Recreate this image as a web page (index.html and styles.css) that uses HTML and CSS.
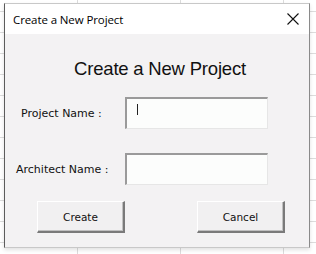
FILE: index.html
```html
<!DOCTYPE html>
<html lang="en">
<head>
    <meta charset="UTF-8">
    <title>Create a New Project</title>
    <link rel="stylesheet" href="styles.css">
</head>
<body>
    <div class="dialog">
        <div class="titlebar">
            <span class="title">Create a New Project</span>
            <svg class="close" width="12" height="12" viewBox="0 0 12 12">
                <path d="M0.5 0.5 L11.5 11.5 M11.5 0.5 L0.5 11.5" stroke="#111" stroke-width="1.1" fill="none"/>
            </svg>
        </div>
        <div class="content">
            <h1>Create a New Project</h1>

            <div class="row row-first">
                <label class="label label-project" for="projectName">Project Name :</label>
                <div class="field"><span class="caret"></span></div>
            </div>

            <div class="row">
                <label class="label label-architect" for="architectName">Architect Name :</label>
                <div class="field"></div>
            </div>

            <div class="buttons">
                <button class="btn">Create</button>
                <button class="btn">Cancel</button>
            </div>
        </div>
    </div>
</body>
</html>
```

FILE: styles.css
```css
html, body {
    margin: 0;
    padding: 0;
}
body {
    width: 316px;
    height: 254px;
    overflow: hidden;
    background-color: #fff;
    background-image:
        linear-gradient(to right, #dcdcdc 1px, transparent 1px),
        linear-gradient(to bottom, #dcdcdc 1px, transparent 1px);
    background-size: 103px 100%, 100% 21px;
    background-position: 77px 0, 0 11px;
    font-family: 'DejaVu Sans', sans-serif;
    padding-top: 3px;
    box-sizing: border-box;
}
.dialog {
    margin-left: 4px;
    width: 306px;
    height: 245px;
    background: #f3f2f3;
    border-left: 1px solid #5c5c5c;
    border-right: 1px solid #8a8a8a;
    border-top: 1px solid #c8c8c8;
    border-bottom: 1px solid #c8c8c8;
    box-sizing: border-box;
    box-shadow: 0 2px 4px rgba(0, 0, 0, 0.12);
}
.titlebar {
    height: 30px;
    background: #fff;
    display: flex;
    align-items: center;
    justify-content: space-between;
    padding: 0 10px 0 8px;
}
.title {
    font-family: 'Open Sans', 'Noto Sans', sans-serif;
    font-size: 11.5px;
    color: #000;
    letter-spacing: -0.1px;
}
.close {
    display: block;
}
.content {
    padding-top: 23px;
}
h1 {
    margin: 0;
    text-align: center;
    font-family: 'Liberation Sans', 'DejaVu Sans', sans-serif;
    font-weight: normal;
    font-size: 18.5px;
    line-height: 24px;
    color: #111;
    letter-spacing: -0.2px;
    padding-left: 6px;
}
.row {
    display: flex;
    align-items: center;
    margin-top: 24px;
}
.row-first {
    margin-top: 16px;
}
.label {
    font-size: 11px;
    color: #111;
    width: 120px;
    box-sizing: border-box;
}
.label-project {
    padding-left: 16px;
}
.label-architect {
    padding-left: 11px;
}
.field {
    width: 143px;
    height: 32px;
    box-sizing: border-box;
    background: #fcfdfc;
    border-top: 2px solid #9a9a9a;
    border-left: 2px solid #9a9a9a;
    border-right: 1px solid #e6e6e6;
    border-bottom: 1px solid #e6e6e6;
    padding: 5px 0 0 10px;
}
.caret {
    display: block;
    width: 1px;
    height: 11px;
    background: #222;
}
.buttons {
    display: flex;
    justify-content: space-between;
    padding: 0 24px 0 32px;
    margin-top: 16px;
}
.btn {
    width: 88px;
    height: 32px;
    font-family: 'DejaVu Sans', sans-serif;
    font-size: 10.5px;
    color: #111;
    background: #f1f0f1;
    border-top: 1px solid #fff;
    border-left: 1px solid #fff;
    border-right: 2px solid #7a7a7a;
    border-bottom: 2px solid #7a7a7a;
    box-shadow: inset -1px -1px 0 #c0c0c0;
    padding: 0;
}
```
